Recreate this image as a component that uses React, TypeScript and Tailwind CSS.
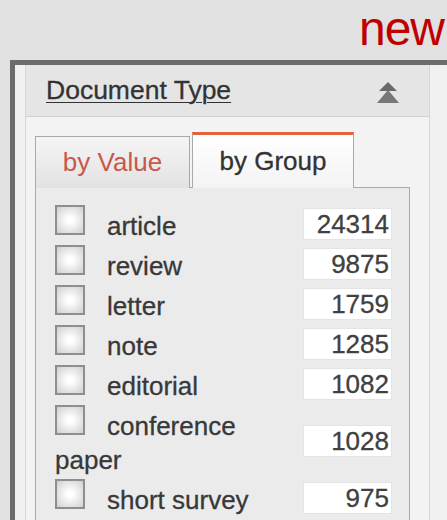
import { useState } from "react";

/** Facet panel: "Document Type" filter with value/group tabs and per-type counts. */

type Facet = { label: string; count: number };

const facets: Facet[] = [
  { label: "article", count: 24314 },
  { label: "review", count: 9875 },
  { label: "letter", count: 1759 },
  { label: "note", count: 1285 },
  { label: "editorial", count: 1082 },
  { label: "conference paper", count: 1028 },
  { label: "short survey", count: 975 },
];

function CollapseIcon() {
  return (
    <svg width="24" height="22" viewBox="0 0 24 22" aria-hidden className="mt-[4px]">
      <polygon points="12,0 3,9 21,9" fill="#6a6a6a" />
      <polygon points="12,8 1,21 23,21" fill="#777" />
    </svg>
  );
}

function Row({ facet }: { facet: Facet }) {
  const [checked, setChecked] = useState(false);
  return (
    <div className="flex items-center py-px">
      <label className="w-[230px] cursor-pointer text-[26px] leading-[34px] text-[#383838] [-webkit-text-stroke:0.3px_#383838]">
        <span
          onClick={() => setChecked(!checked)}
          className="mr-[22px] inline-block h-[30px] w-[30px] border-2 border-[#8e8e8e] bg-[radial-gradient(circle,#ffffff_15%,#d2d2d2_95%)] align-baseline"
        >
          {checked && <span className="block h-full w-full text-center text-[20px] leading-[26px]">✓</span>}
        </span>
        {facet.label}
      </label>
      <div className="ml-auto h-[32px] w-[89px] border border-[#e4e4e4] bg-white pr-[2px] text-right text-[26px] leading-[30px] text-[#404040] [-webkit-text-stroke:0.3px_#404040]">
        {facet.count}
      </div>
    </div>
  );
}

export default function App() {
  const [tab, setTab] = useState<"value" | "group">("group");

  return (
    <div className="h-[520px] w-[447px] overflow-hidden bg-[#e1e1e1] font-['Liberation_Sans',Arial,sans-serif]">
      <div className="flex h-[60px] items-start justify-end pr-[3px] pt-[4px]">
        <span className="text-[48px] leading-[50px] tracking-[-1px] text-[#c00000]">new</span>
      </div>

      <div className="ml-[10px] h-full border-l-[5px] border-t-[5px] border-[#6b6c6e] bg-[#f1f1f1] pl-[10px]">
        <div className="h-full w-[405px] border-x border-[#d6d6d6] bg-[#f3f3f3]">
          {/* Header */}
          <div className="flex h-[52px] items-center justify-between border-b border-[#d2d2d2] bg-[#e5e5e5] pl-[20px] pr-[29px]">
            <span className="text-[26.5px] text-[#333] underline decoration-1 underline-offset-[3px] [-webkit-text-stroke:0.3px_#333]">
              Document Type
            </span>
            <CollapseIcon />
          </div>

          <div className="pl-[9px] pr-[19px] pt-[15px]">
            {/* Tabs */}
            <div className="relative z-10 -mb-px flex items-end">
              <button
                onClick={() => setTab("value")}
                className="h-[52px] w-[155px] border border-b-0 border-[#a9a9a9] bg-[linear-gradient(#f5f5f5,#e2e2e2)] text-[26px] text-[#c9574c]"
              >
                by Value
              </button>
              <button
                onClick={() => setTab("group")}
                className="ml-[2px] h-[56px] w-[162px] border-x border-t-[3px] border-x-[#a9a9a9] border-t-[#e2633e] bg-[linear-gradient(#ffffff,#f3f3f3)] text-[26px] text-[#333] [-webkit-text-stroke:0.3px_#333]"
              >
                by Group
              </button>
            </div>

            {/* Tab content */}
            <div className="h-[400px] border border-[#a9a9a9] bg-[#ebebeb] pl-[19px] pr-[17px] pt-[16px]">
              {tab === "group" && facets.map((f) => <Row key={f.label} facet={f} />)}
            </div>
          </div>
        </div>
      </div>
    </div>
  );
}
